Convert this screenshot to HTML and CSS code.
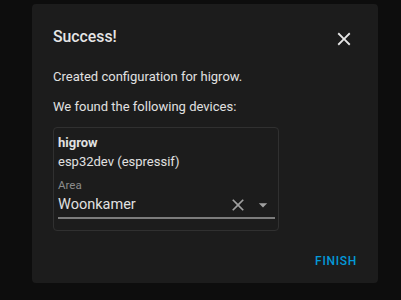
FILE: index.html
```html
<!DOCTYPE html>
<html>
<head>
<meta charset="utf-8">
<link rel="stylesheet" href="styles.css">
</head>
<body>
<div class="dialog">
  <div class="header">
    <h2 class="title">Success!</h2>
    <button class="close" aria-label="Close">
      <svg viewBox="0 0 24 24" width="22" height="22"><path fill="currentColor" d="M19,6.41L17.59,5L12,10.59L6.41,5L5,6.41L10.59,12L5,17.59L6.41,19L12,13.41L17.59,19L19,17.59L13.41,12L19,6.41Z"/></svg>
    </button>
  </div>
  <p class="text first">Created configuration for higrow.</p>
  <p class="text">We found the following devices:</p>
  <div class="card">
    <div class="name">higrow</div>
    <div class="model">esp32dev (espressif)</div>
    <div class="field">
      <div class="label">Area</div>
      <div class="row">
        <span class="value">Woonkamer</span>
        <svg class="clear" viewBox="0 0 24 24" width="20" height="20"><path fill="currentColor" d="M19,6.41L17.59,5L12,10.59L6.41,5L5,6.41L10.59,12L5,17.59L6.41,19L12,13.41L17.59,19L19,17.59L13.41,12L19,6.41Z"/></svg>
        <svg class="arrow" viewBox="0 0 24 24" width="20" height="20"><path fill="currentColor" d="M7,10L12,15L17,10H7Z"/></svg>
      </div>
    </div>
  </div>
  <div class="actions">
    <button class="finish">Finish</button>
  </div>
</div>
</body>
</html>
```

FILE: styles.css
```css
html, body {
  margin: 0;
  padding: 0;
  background: #0d0d0d;
  height: 100%;
}
body {
  font-family: Roboto, "Noto Sans", sans-serif;
  color: #e1e1e1;
  padding: 4px 0 0 32px;
  box-sizing: border-box;
}
.dialog {
  width: 346px;
  height: 279px;
  background: #1c1c1c;
  border-radius: 4px;
  box-sizing: border-box;
  padding: 21px 21px 0 21px;
  display: flex;
  flex-direction: column;
}
.header {
  display: flex;
  justify-content: space-between;
  align-items: flex-start;
  height: 24px;
}
.title {
  margin: 0;
  font-size: 15.8px;
  line-height: 24px;
  font-weight: 500;
  color: #e6e6e6;
}
.close {
  background: none;
  border: 0;
  padding: 0;
  margin-top: 3px;
  margin-right: 2px;
  color: #e6e6e6;
  width: 22px;
  height: 22px;
}
.close svg { display: block; }
.text {
  margin: 0;
  font-size: 13px;
  line-height: 20px;
  color: #e1e1e1;
}
.first { margin-top: 17.5px; margin-bottom: 10px; }
.card {
  margin-top: 10.5px;
  width: 226px;
  height: 104px;
  box-sizing: border-box;
  border: 1px solid #303030;
  border-radius: 4px;
  padding: 5px 3px 0 4px;
}
.name {
  font-size: 13px;
  line-height: 19px;
  font-weight: 700;
}
.model {
  font-size: 13px;
  line-height: 19px;
}
.field {
  margin-top: 7px;
  border-bottom: 2px solid #7c7c7c;
  padding-bottom: 1px;
}
.label {
  font-size: 11.5px;
  line-height: 14px;
  color: #8c8c8c;
}
.row {
  margin-top: 2px;
  display: flex;
  align-items: center;
  height: 22px;
}
.value {
  font-size: 14.5px;
  line-height: 22px;
  flex: 1;
  color: #e1e1e1;
}
.clear {
  color: #a0a0a0;
  margin-right: 5px;
}
.arrow {
  color: #a0a0a0;
  margin-right: 2px;
}
.actions {
  margin-top: auto;
  display: flex;
  justify-content: flex-end;
  padding-bottom: 14px;
}
.finish {
  background: none;
  border: 0;
  padding: 0;
  font-family: Roboto, sans-serif;
  font-size: 12px;
  line-height: 16px;
  font-weight: 500;
  letter-spacing: 0.7px;
  text-transform: uppercase;
  color: #0399d8;
}
```
